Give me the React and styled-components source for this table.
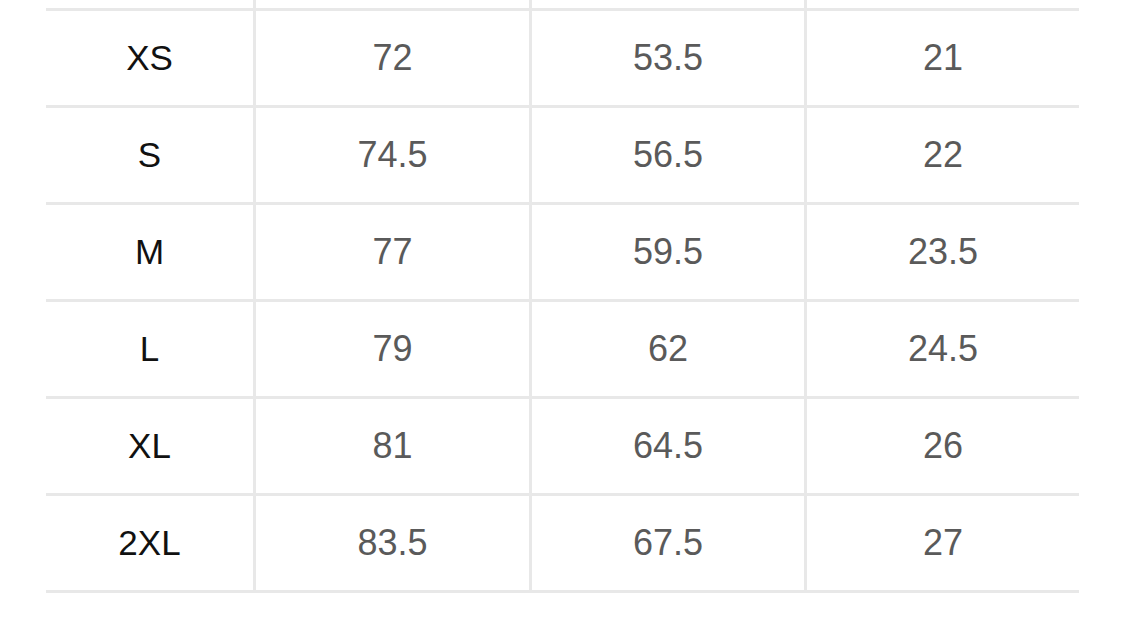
import React from 'react';
import styled, { createGlobalStyle } from 'styled-components';

const GlobalStyle = createGlobalStyle`
    html, body {
        margin: 0;
        padding: 0;
        background: #ffffff;
    }
    body {
        font-family: "Liberation Sans", Arial, sans-serif;
    }
`;

const Page = styled.div`
    width: 1125px;
    height: 617px;
    overflow: hidden;
    background: #ffffff;
`;

const Table = styled.div`
    margin-left: 46px;
    display: grid;
    grid-template-columns: 207px 276px 275px 275px;
`;

const Cell = styled.div`
    height: ${props => props.$stub ? '8px' : '94px'};
    display: flex;
    align-items: center;
    justify-content: center;
    border-bottom: 3px solid #e8e8e8;
    border-left: ${props => props.$first ? 'none' : '3px solid #e8e8e8'};
    font-size: ${props => props.$first ? '35px' : '36px'};
    color: ${props => props.$first ? '#111111' : '#5a5a5a'};
    box-sizing: content-box;
`;

const rows = [
    ['XS', '72', '53.5', '21'],
    ['S', '74.5', '56.5', '22'],
    ['M', '77', '59.5', '23.5'],
    ['L', '79', '62', '24.5'],
    ['XL', '81', '64.5', '26'],
    ['2XL', '83.5', '67.5', '27'],
];

const App = () => {
    return (
        <Page>
            <GlobalStyle />
            <Table>
                {[0, 1, 2, 3].map(i => (
                    <Cell key={'stub' + i} $stub $first={i === 0} />
                ))}
                {rows.map(row =>
                    row.map((value, i) => (
                        <Cell key={row[0] + i} $first={i === 0}>
                            {value}
                        </Cell>
                    ))
                )}
            </Table>
        </Page>
    );
}

export default App;
